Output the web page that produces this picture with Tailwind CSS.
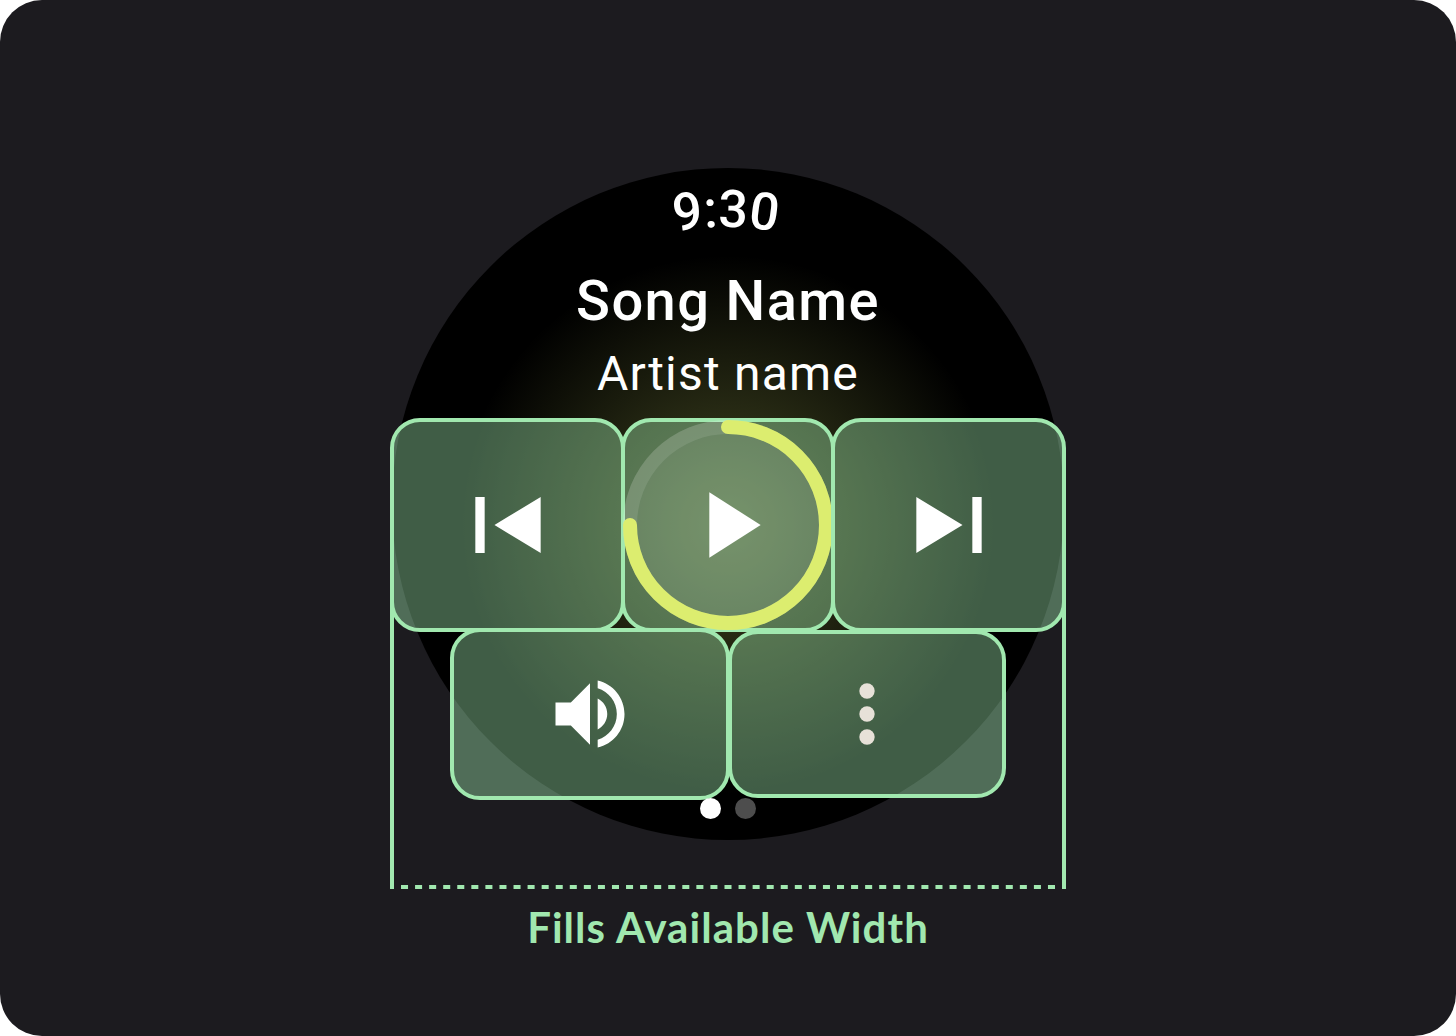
<!DOCTYPE html>
<html lang="en">
<head>
<meta charset="utf-8">
<meta name="viewport" content="width=device-width, initial-scale=1">
<title>Media controls: fills available width</title>
<script src="https://cdn.jsdelivr.net/npm/@tailwindcss/browser@4"></script>
</head>
<body class="bg-white">
<main class="flex min-h-screen flex-col items-center rounded-[42px] bg-[#1c1b1f] pt-[168px] pb-20 font-['Roboto',sans-serif] text-white">
  <figure class="flex flex-col items-center">
    <section aria-label="Media player" class="relative flex h-[721px] w-[676px] flex-col items-center">
      <!-- Watch face -->
      <div class="absolute inset-x-0.5 top-0 h-[672px] rounded-full bg-black bg-[radial-gradient(circle_270px_at_336px_357px,rgba(220,237,111,0.3),rgba(220,237,111,0))]"></div>

      <!-- Curved clock -->
      <svg class="relative h-24 w-[300px]" viewBox="0 0 300 96" fill="#fff" role="img" aria-label="9:30">
        <path id="clock-arc" d="M-128 335A276 276 0 0 1 424 335" fill="none"/>
        <text font-family="Roboto, sans-serif" font-size="52" font-weight="500" text-anchor="middle"><textPath href="#clock-arc" startOffset="50%">9:30</textPath></text>
      </svg>

      <h1 class="relative h-[72px] text-[56px] leading-[74px] font-medium tracking-wide">Song Name</h1>
      <p class="relative h-[82px] text-[48px] leading-[76px] tracking-wide">Artist name</p>

      <div class="relative flex w-full">
        <button type="button" aria-label="Previous" class="relative flex h-[214px] flex-1 items-center justify-center rounded-[30px] border-4 border-[#a1e8af] bg-[#a1e8af]/40">
          <svg class="size-28" viewBox="0 0 24 24" fill="currentColor"><path d="M5 6h2v12H5zM9.1 12 19 6v12z"/></svg>
        </button>
        <button type="button" aria-label="Play" class="relative -mx-1 flex size-[214px] items-center justify-center rounded-[30px] border-4 border-[#a1e8af] bg-[#a1e8af]/40">
          <svg class="absolute -inset-1 size-[214px]" viewBox="0 0 214 214" fill="none" stroke-width="14">
            <circle cx="107" cy="107" r="105" fill="#fff" fill-opacity=".1"/>
            <circle cx="107" cy="107" r="98" stroke="#fff" stroke-opacity=".1"/>
            <path d="M107 9a98 98 0 1 1-98 98" stroke="#dced6f" stroke-linecap="round"/>
          </svg>
          <svg class="relative size-28" viewBox="0 0 24 24" fill="currentColor"><path d="M8 5v14l11-7z"/></svg>
        </button>
        <button type="button" aria-label="Next" class="relative flex h-[214px] flex-1 items-center justify-center rounded-[30px] border-4 border-[#a1e8af] bg-[#a1e8af]/40">
          <svg class="size-28" viewBox="0 0 24 24" fill="currentColor"><path d="M17 6h2v12h-2zM5 6v12l9.9-6z"/></svg>
        </button>
      </div>

      <div class="relative -mt-1 flex items-center">
        <button type="button" aria-label="Volume" class="flex h-[172px] w-[280px] items-center justify-center rounded-[30px] border-4 border-[#a1e8af] bg-[#a1e8af]/40">
          <svg class="size-[92px]" viewBox="0 0 24 24" fill="currentColor"><path d="M3 9v6h4l5 5V4L7 9H3zm13.5 3c0-1.77-1.02-3.29-2.5-4.03v8.05c1.48-.73 2.5-2.25 2.5-4.02zM14 3.23v2.06c2.89.86 5 3.54 5 6.71s-2.11 5.85-5 6.71v2.06c4.01-.91 7-4.49 7-8.77s-2.99-7.86-7-8.77z"/></svg>
        </button>
        <button type="button" aria-label="More" class="-ml-0.5 flex h-[168px] w-[278px] items-center justify-center rounded-[30px] border-4 border-[#a1e8af] bg-[#a1e8af]/40 text-[#e7e1d8]">
          <svg class="size-[92px]" viewBox="0 0 24 24" fill="currentColor"><circle cx="12" cy="6" r="2"/><circle cx="12" cy="12" r="2"/><circle cx="12" cy="18" r="2"/></svg>
        </button>
      </div>

      <!-- Page indicator -->
      <div class="relative -mt-0.5 flex gap-3.5">
        <span class="size-[21px] rounded-full bg-white"></span>
        <span class="size-[21px] rounded-full bg-[#4d4d4d]"></span>
      </div>

      <!-- Width bracket -->
      <div class="pointer-events-none absolute inset-x-0 top-[280px] bottom-0 flex items-end border-x-4 border-[#a1e8af] px-[7px]">
        <svg class="h-1 w-full" viewBox="0 0 654 4" preserveAspectRatio="none"><path d="M0 2h654" pathLength="93" stroke="#a1e8af" stroke-width="4" stroke-dasharray="1"/></svg>
      </div>
    </section>
    <figcaption class="pt-3 font-['Lato',sans-serif] text-[42px] leading-[52px] font-bold tracking-wide text-[#a1e8af]">Fills Available Width</figcaption>
  </figure>
</main>
</body>
</html>
